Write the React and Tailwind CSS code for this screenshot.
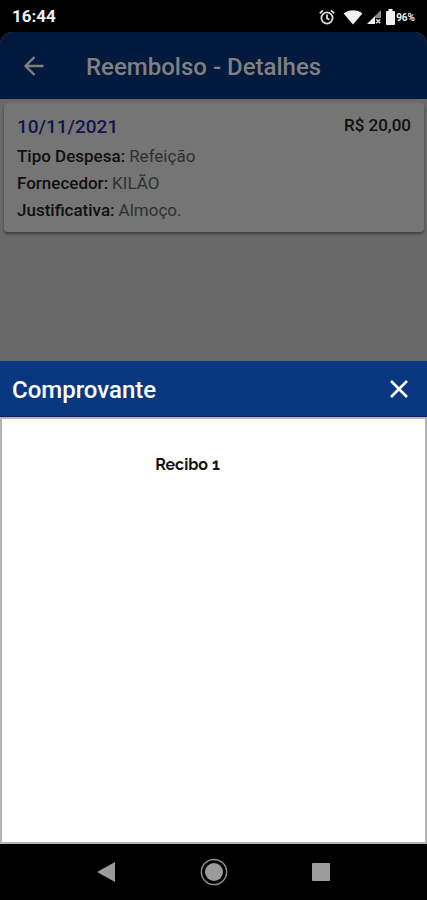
import React from 'react';

const details = [
  { label: 'Tipo Despesa:', value: 'Refeição' },
  { label: 'Fornecedor:', value: 'KILÃO' },
  { label: 'Justificativa:', value: 'Almoço.' },
];

function StatusBar() {
  return (
    <div className="flex h-8 items-center justify-between bg-black px-3 pt-0.5 text-[#f0f0f0]">
      <span className="text-[17px] font-bold">16:44</span>
      <div className="flex items-center">
        {/* alarm */}
        <svg width="16" height="16" viewBox="0 0 16 16" fill="none" stroke="#dcdcdc" strokeWidth="1.8" className="mr-2">
          <circle cx="8" cy="9" r="5.6" />
          <path d="M8 5.500v3.700l2.400 1.500M.8 4.200l3.200-2.800M15.200 4.200 12 1.400" />
        </svg>
        {/* wifi */}
        <svg width="20" height="16" viewBox="0 0 20 16" fill="#f0f0f0" className="mr-1">
          <path d="M10 15.5.6 4.500C6 .2 14 .2 19.400 4.500z" />
        </svg>
        {/* signal */}
        <svg width="14" height="14" viewBox="0 0 14 14" className="mr-1">
          <path d="M8 6v8H0z" fill="#f0f0f0" />
          <path d="M8 6 14 0v8H8z" fill="#8a8a8a" />
          <path d="m9.200 9.200 4 4m0-4-4 4" stroke="#dcdcdc" strokeWidth="1.6" />
        </svg>
        {/* battery */}
        <svg width="11" height="18" viewBox="0 0 11 18" fill="#f0f0f0">
          <path d="M3.500 1h4v2H9a1 1 0 0 1 1 1v12a1 1 0 0 1-1 1H2a1 1 0 0 1-1-1V4a1 1 0 0 1 1-1h1.500z" />
        </svg>
        <span className="text-[10px] font-bold">96%</span>
      </div>
    </div>
  );
}

function ExpenseCard() {
  return (
    <div className="mt-1 mr-[3px] ml-1 rounded bg-[#757575] px-[13px] pt-3 pb-2 shadow-[0_2px_3px_rgba(0,0,0,0.4)]">
      <div className="flex justify-between">
        <h2 className="text-[19px] leading-6 font-medium text-[#11164c]">10/11/2021</h2>
        <span className="text-[17px] leading-5 font-medium text-[#101010]">R$ 20,00</span>
      </div>
      <dl className="mt-1">
        {details.map((item) => (
          <div key={item.label} className="flex h-[27px] items-center gap-1 text-[17px]">
            <dt className="font-medium text-[#101010]">{item.label}</dt>
            <dd className="text-[#303030]">{item.value}</dd>
          </div>
        ))}
      </dl>
    </div>
  );
}

function ReceiptSheet() {
  return (
    <section role="dialog" aria-labelledby="sheet-title">
      <div className="flex h-14 items-center justify-between border-b border-[#06206e] bg-[#0a3880] px-3 pt-0.5 text-white">
        <h2 id="sheet-title" className="text-2xl font-medium">Comprovante</h2>
        <button type="button" aria-label="Fechar" className="p-1">
          <svg width="24" height="24" viewBox="0 0 24 24" stroke="white" strokeWidth="2.600">
            <path d="m4 3 16 16M20 3 4 19" />
          </svg>
        </button>
      </div>
      <div className="min-h-[427px] border-2 border-[#b4b4b4] bg-white pt-[34px] pr-[52px] text-center">
        <p className="font-['Raleway','Montserrat','Open_Sans',sans-serif] text-base font-bold text-[#151515]">Recibo 1</p>
      </div>
    </section>
  );
}

function NavigationBar() {
  return (
    <nav className="flex h-14 items-center justify-center gap-20 bg-black">
      <button type="button" aria-label="Voltar">
        <svg width="28" height="28" viewBox="0 0 28 28" fill="#9b9b9b">
          <path d="M5 14 23 4v20z" />
        </svg>
      </button>
      <button type="button" aria-label="Início">
        <svg width="28" height="28" viewBox="0 0 28 28">
          <circle cx="14" cy="14" r="12.600" fill="none" stroke="#8c8c8c" strokeWidth="1.500" />
          <circle cx="14" cy="14" r="9" fill="#9b9b9b" />
        </svg>
      </button>
      <button type="button" aria-label="Recentes">
        <svg width="28" height="28" viewBox="0 0 28 28" fill="#9b9b9b">
          <rect x="4" y="5" width="18" height="18" rx="1" />
        </svg>
      </button>
    </nav>
  );
}

function App() {
  return (
    <div className="flex min-h-screen flex-col bg-black font-['Roboto',sans-serif]">
      <StatusBar />
      <main className="flex-1 rounded-t-xl bg-[#696969]">
        <header className="flex h-[67px] items-center gap-9 rounded-t-xl bg-[#03193d] pt-0.5 pl-5 text-[#808080]">
          <button type="button" aria-label="Voltar" className="p-0.5">
            <svg width="26" height="26" viewBox="0 0 26 26" fill="none" stroke="currentColor" strokeWidth="2.400">
              <path d="M21.500 12h-18M12.500 3l-9 9 9 9" />
            </svg>
          </button>
          <h1 className="text-2xl font-medium">Reembolso - Detalhes</h1>
        </header>
        <ExpenseCard />
      </main>
      <ReceiptSheet />
      <NavigationBar />
    </div>
  );
}

export default App;
